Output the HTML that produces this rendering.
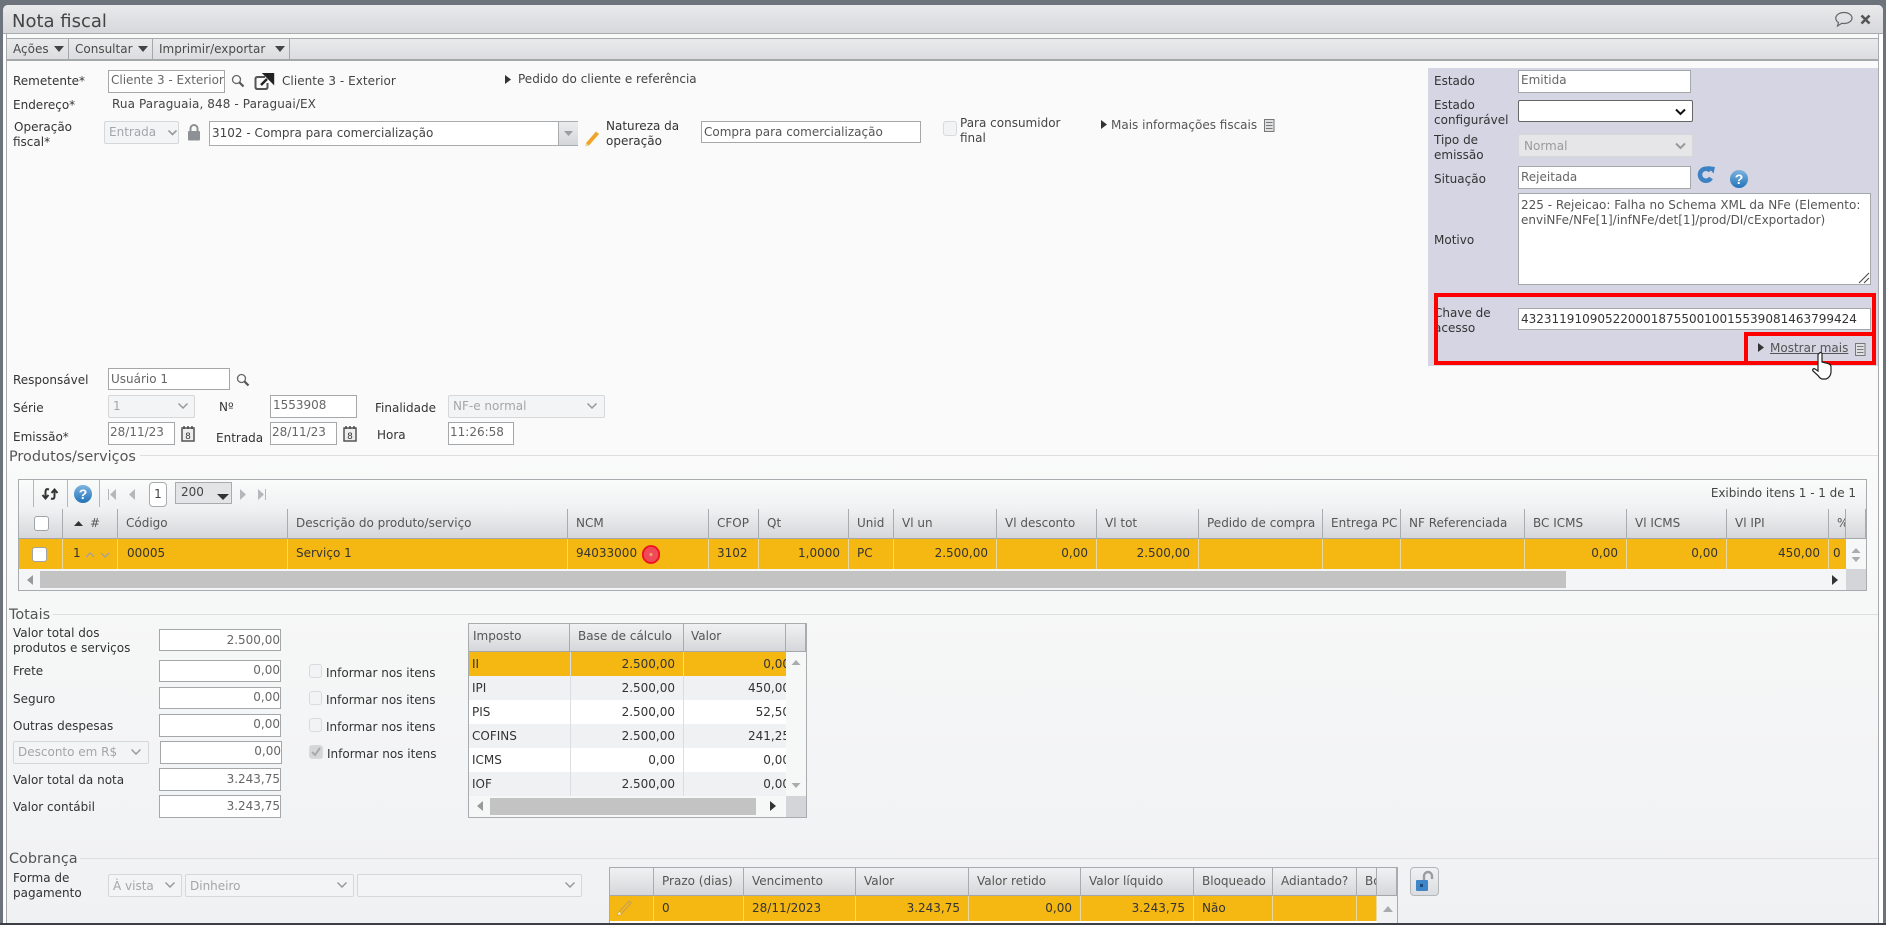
<!DOCTYPE html>
<html><head><meta charset="utf-8"><title>Nota fiscal</title>
<style>
html,body{margin:0;padding:0;background:#5a6068}
#p{position:relative;width:1886px;height:925px;overflow:hidden;background:#6d737a;font:12px/16px "DejaVu Sans",sans-serif;color:#333}
#p div,#p span.a,#p svg{position:absolute}
.t{white-space:nowrap;height:16px;line-height:16px}
.i{box-sizing:border-box;background:#fff;border:1px solid #a4a8ab;color:#666;padding:0 2px;line-height:17px;white-space:nowrap;overflow:hidden}
.r{text-align:right;padding-right:0}
.s{box-sizing:border-box;background:#f3f4f5;border:1px solid #d5d7d9;border-radius:2px;color:#a3a6a8;padding-left:4px;line-height:19px;white-space:nowrap}
.cb{box-sizing:border-box;background:#fff;border:1px solid #a0a4a8;border-radius:3px}
.cd{box-sizing:border-box;background:#f2f3f4;border:1px solid #d8dadc;border-radius:3px}
.h{background:linear-gradient(#f0f1f2,#d6d7da);border-bottom:1px solid #a4a7aa;border-right:1px solid #a9acaf;box-sizing:border-box;color:#555;line-height:27px;padding-left:8px;white-space:nowrap;overflow:hidden}
.c{background:#f5b813;box-sizing:border-box;border-right:1px solid #e9d8a0;color:#333;line-height:28px;padding:0 8px;white-space:nowrap;overflow:hidden}
.sec{font-size:14.4px;color:#555}
.ln{height:1px;background:#dcdee0}
.btn{box-sizing:border-box;top:38px;height:23px;border-right:1px solid #a5a8ab;color:#4a4a4a;line-height:23px;padding-left:6px}
</style></head><body><div id="p">

<div style="left:3px;top:5px;width:1880px;height:920px;background:#f8f9f9;border-radius:5px 5px 0 0"></div>
<div style="left:3px;top:5px;width:1880px;height:28px;background:linear-gradient(#e9eaec,#d7d8db);border-bottom:1px solid #a8abae;border-radius:5px 5px 0 0;box-sizing:content-box"></div>
<div class="t" style="left:12px;top:11px;font-size:18px;line-height:22px;height:22px;color:#444">Nota fiscal</div>
<svg style="left:1834px;top:11px" width="20" height="17" viewBox="0 0 20 17"><path d="M10 1.500c4.500 0 8 2.400 8 5.500s-3.500 5.500-8 5.500c-.8 0-1.500 0-2.200-.2L3.500 15l1-3.500C2.800 10.500 1.800 8.900 1.800 7 1.800 3.900 5.500 1.500 10 1.500z" fill="none" stroke="#666" stroke-width="1.200"/></svg>
<svg style="left:1860px;top:14px" width="11" height="11" viewBox="0 0 11 11"><path d="M1.500 1.500l8 8M9.500 1.500l-8 8" stroke="#555" stroke-width="2.600"/></svg>

<div style="left:6px;top:33px;width:1px;height:892px;background:#a8abae"></div>
<div style="left:1878px;top:33px;width:1px;height:892px;background:#a8abae"></div>
<div style="left:7px;top:61px;width:1871px;height:864px;background:linear-gradient(#f9faf9 0,#f9faf9 45%,#f0f1f3 100%)"></div>
<div style="left:4px;top:34px;width:2px;height:891px;background:#fff"></div>
<div style="left:1879px;top:34px;width:4px;height:891px;background:#fff"></div>

<!-- toolbar -->
<div style="left:6px;top:38px;width:1873px;height:23px;box-sizing:border-box;background:linear-gradient(#e9eaeb,#dcdde0);border:1px solid #a8abae;border-bottom:2px solid #a3a9a9"></div>
<div class="btn" style="left:7px;width:62px">Ações</div>
<div class="btn" style="left:69px;width:84px">Consultar</div>
<div class="btn" style="left:153px;width:137px">Imprimir/exportar</div>
<svg style="left:54px;top:46px" width="10" height="6"><path d="M0 0h10L5 6z" fill="#444"/></svg>
<svg style="left:138px;top:46px" width="10" height="6"><path d="M0 0h10L5 6z" fill="#444"/></svg>
<svg style="left:275px;top:46px" width="10" height="6"><path d="M0 0h10L5 6z" fill="#444"/></svg>

<!-- left form -->
<div class="t" style="left:13px;top:73px">Remetente*</div>
<div class="i" style="left:108px;top:70px;width:117px;height:23px;line-height:19px">Cliente 3 - Exterior</div>
<svg style="left:231px;top:74px" width="14" height="14" viewBox="0 0 14 14"><circle cx="5.500" cy="5.500" r="4" fill="none" stroke="#666" stroke-width="1.300"/><path d="M8.500 8.500l4 4" stroke="#555" stroke-width="2.200"/></svg>
<svg style="left:254px;top:73px" width="22" height="18" viewBox="0 0 22 18"><path d="M11 4H3.500Q1.500 4 1.500 6v8q0 2 2 2h8q2 0 2-2v-4" fill="none" stroke="#555" stroke-width="2"/><path d="M7 12l6-6M10.500 1H19v8.500z" stroke="#222" stroke-width="2.400" fill="#222"/></svg>
<div class="t" style="left:282px;top:73px;color:#444;letter-spacing:.05px">Cliente 3 - Exterior</div>
<svg style="left:505px;top:75px" width="6" height="9"><path d="M0 0l6 4.500L0 9z" fill="#333"/></svg>
<div class="t" style="left:518px;top:71px;color:#444">Pedido do cliente e referência</div>

<div class="t" style="left:13px;top:97px">Endereço*</div>
<div class="t" style="left:112px;top:96px;color:#444;letter-spacing:.1px">Rua Paraguaia, 848 - Paraguai/EX</div>

<div class="t" style="left:14px;top:119px">Operação</div>
<div class="t" style="left:13px;top:134px">fiscal*</div>
<div class="s" style="left:104px;top:121px;width:75px;height:23px;line-height:21px">Entrada</div>
<svg style="left:168px;top:130px" width="9" height="6"><path d="M.5.500L4.500 4.500 8.500.500" fill="none" stroke="#999" stroke-width="1.600"/></svg>
<svg style="left:187px;top:124px" width="14" height="17" viewBox="0 0 14 17"><path d="M3.500 8V4.500a3.500 3.500 0 0 1 7 0V8" fill="none" stroke="#8d9094" stroke-width="2"/><rect x="1" y="7" width="12" height="9.500" rx="1" fill="#8d9094"/></svg>
<div class="i" style="left:209px;top:121px;width:369px;height:25px;line-height:23px;color:#444;border-color:#a9acaf">3102 - Compra para comercialização</div>
<div style="left:558px;top:122px;width:19px;height:23px;background:linear-gradient(#eceded,#d5d6d9);border-left:1px solid #a9acaf"></div>
<svg style="left:564px;top:131px" width="9" height="5"><path d="M0 0h9L4.500 5z" fill="#9a9da0"/></svg>
<svg style="left:584px;top:130px" width="16" height="17" viewBox="0 0 16 17"><path d="M12 1.500l3 2.500L5 15.500l-3.500 1 .5-3.500z" fill="#f0a52a"/><path d="M2 13l3 2.500-3.500 1z" fill="#e8d8b0"/></svg>
<div class="t" style="left:606px;top:118px">Natureza da</div>
<div class="t" style="left:606px;top:133px">operação</div>
<div class="i" style="left:701px;top:121px;width:220px;height:22px;line-height:20px;color:#555">Compra para comercialização</div>
<div class="cd" style="left:943px;top:121px;width:14px;height:15px"></div>
<div class="t" style="left:960px;top:115px;color:#444">Para consumidor</div>
<div class="t" style="left:960px;top:130px;color:#444">final</div>
<svg style="left:1101px;top:120px" width="6" height="9"><path d="M0 0l6 4.500L0 9z" fill="#333"/></svg>
<div class="t" style="left:1111px;top:117px;color:#555">Mais informações fiscais</div>
<svg style="left:1264px;top:119px" width="11" height="13" viewBox="0 0 11 13"><rect x=".5" y=".5" width="9.500" height="12" fill="#dfe0e2" stroke="#777"/><path d="M2 3.500h6.500M2 6.500h6.500M2 9.500h6.500" stroke="#777"/></svg>

<!-- right panel -->
<div style="left:1428px;top:68px;width:450px;height:298px;background:#d5d5e3"></div>
<div class="t" style="left:1434px;top:73px">Estado</div>
<div class="i" style="left:1518px;top:70px;width:173px;height:23px;line-height:19px">Emitida</div>
<div class="t" style="left:1434px;top:97px">Estado</div>
<div class="t" style="left:1434px;top:112px">configurável</div>
<div style="left:1518px;top:100px;width:175px;height:22px;box-sizing:border-box;background:#fff;border:1px solid #666;border-radius:2px"></div>
<svg style="left:1675px;top:108px" width="11" height="8"><path d="M1 1.500L5.500 6 10 1.500" fill="none" stroke="#111" stroke-width="2"/></svg>
<div class="t" style="left:1434px;top:132px">Tipo de</div>
<div class="t" style="left:1434px;top:147px">emissão</div>
<div class="s" style="left:1518px;top:134px;width:175px;height:23px;background:#e6e6e9;color:#9a9a9c;padding-left:5px;line-height:22px">Normal</div>
<svg style="left:1675px;top:142px" width="11" height="8"><path d="M1 1.500L5.500 6 10 1.500" fill="none" stroke="#999" stroke-width="2"/></svg>
<div class="t" style="left:1434px;top:171px">Situação</div>
<div class="i" style="left:1518px;top:166px;width:173px;height:23px;line-height:20px">Rejeitada</div>
<svg style="left:1696px;top:165px" width="20" height="20" viewBox="0 0 20 20"><path d="M14.500 5.800A6 6 0 1 0 15 13" fill="none" stroke="#3d82c4" stroke-width="4.500"/><path d="M11 1l8 1-1.500 6.500z" fill="#3d82c4"/></svg>
<svg style="left:1730px;top:170px" width="18" height="18" viewBox="0 0 18 18"><defs><linearGradient id="g" x1="0" y1="0" x2="0" y2="1"><stop offset="0" stop-color="#7db4e0"/><stop offset="1" stop-color="#2273b9"/></linearGradient></defs><circle cx="9" cy="9" r="9" fill="url(#g)"/><text x="9" y="14" text-anchor="middle" font-family="Liberation Sans,sans-serif" font-weight="bold" font-size="14" fill="#fff">?</text></svg>
<div class="t" style="left:1434px;top:232px">Motivo</div>
<div class="i" style="left:1518px;top:193px;width:353px;height:92px;white-space:normal;color:#555;line-height:15px;padding:4px 2px;overflow:hidden"><span style="white-space:nowrap">225 - Rejeicao: Falha no Schema XML da NFe (Elemento:</span><br>enviNFe/NFe[1]/infNFe/det[1]/prod/DI/cExportador)</div>
<svg style="left:1858px;top:272px" width="12" height="12"><path d="M1 11L11 1M6 11l5-5" stroke="#444" stroke-width="1"/></svg>
<div class="t" style="left:1434px;top:305px">Chave de</div>
<div class="t" style="left:1434px;top:320px">acesso</div>
<div class="i" style="left:1518px;top:308px;width:353px;height:22px;color:#333;line-height:21px">43231191090522000187550010015539081463799424</div>
<div style="left:1434px;top:293px;width:442px;height:72px;box-sizing:border-box;border:4px solid #f00"></div>
<div style="left:1744px;top:332px;width:132px;height:33px;box-sizing:border-box;border:4px solid #f00"></div>
<svg style="left:1758px;top:343px" width="6" height="9"><path d="M0 0l6 4.500L0 9z" fill="#333"/></svg>
<div class="t" style="left:1770px;top:340px;color:#555;text-decoration:underline">Mostrar mais</div>
<svg style="left:1855px;top:343px" width="11" height="13" viewBox="0 0 11 13"><rect x=".5" y=".5" width="9.500" height="12" fill="#dfe0e2" stroke="#777"/><path d="M2 3.500h6.500M2 6.500h6.500M2 9.500h6.500" stroke="#777"/></svg>
<svg style="left:1811px;top:351px" width="24" height="30" viewBox="0 0 24 30"><path d="M8.500 2c1-1 2.500-.5 2.500 1v8l6 1.500c2 .6 3 1.500 3 3.500v5c0 3-2 6-5 7h-4c-2-.5-3-2-4-3.500L2 20c-1-1.500.5-3 2-2l3 2V3.500z" fill="#fff" stroke="#222" stroke-width="1.200"/></svg>

<!-- second form -->
<div class="t" style="left:13px;top:372px">Responsável</div>
<div class="i" style="left:108px;top:368px;width:122px;height:22px;line-height:20px">Usuário 1</div>
<svg style="left:236px;top:373px" width="14" height="14" viewBox="0 0 14 14"><circle cx="5.500" cy="5.500" r="4" fill="none" stroke="#666" stroke-width="1.300"/><path d="M8.500 8.500l4 4" stroke="#555" stroke-width="2.200"/></svg>
<div class="t" style="left:13px;top:400px">Série</div>
<div class="s" style="left:108px;top:395px;width:87px;height:23px;line-height:21px">1</div>
<svg style="left:178px;top:403px" width="10" height="6"><path d="M.5.500L5 5 9.500.500" fill="none" stroke="#999" stroke-width="1.500"/></svg>
<div class="t" style="left:219px;top:399px">Nº</div>
<div class="i" style="left:270px;top:395px;width:87px;height:23px;line-height:19px">1553908</div>
<div class="t" style="left:375px;top:400px">Finalidade</div>
<div class="s" style="left:448px;top:395px;width:157px;height:23px;line-height:21px">NF-e normal</div>
<svg style="left:587px;top:403px" width="10" height="6"><path d="M.5.500L5 5 9.500.500" fill="none" stroke="#999" stroke-width="1.500"/></svg>
<div class="t" style="left:13px;top:429px">Emissão*</div>
<div class="i" style="left:108px;top:422px;width:67px;height:23px;line-height:19px;padding:0 1px">28/11/23</div>
<svg style="left:181px;top:426px" width="14" height="16" viewBox="0 0 14 16"><rect x="1" y="2" width="12" height="13" fill="#eee" stroke="#555" stroke-width="1.500"/><path d="M3 0v3M7 0v3M11 0v3" stroke="#444" stroke-width="1.400"/><text x="7" y="13" text-anchor="middle" font-size="9" fill="#333" font-family="DejaVu Sans">8</text></svg>
<div class="t" style="left:216px;top:430px">Entrada</div>
<div class="i" style="left:270px;top:422px;width:67px;height:23px;line-height:19px;padding:0 1px">28/11/23</div>
<svg style="left:343px;top:426px" width="14" height="16" viewBox="0 0 14 16"><rect x="1" y="2" width="12" height="13" fill="#eee" stroke="#555" stroke-width="1.500"/><path d="M3 0v3M7 0v3M11 0v3" stroke="#444" stroke-width="1.400"/><text x="7" y="13" text-anchor="middle" font-size="9" fill="#333" font-family="DejaVu Sans">8</text></svg>
<div class="t" style="left:377px;top:427px">Hora</div>
<div class="i" style="left:448px;top:422px;width:66px;height:23px;line-height:19px;padding:0 1px">11:26:58</div>

<div class="t sec" style="left:9px;top:448px;height:18px;line-height:18px">Produtos/serviços</div>
<div class="ln" style="left:140px;top:455px;width:1738px"></div>

<!-- product grid -->
<div style="left:18px;top:479px;width:1849px;height:112px;box-sizing:border-box;border:1px solid #a9acaf;background:#f6f7f7"></div>
<div style="left:19px;top:480px;width:1847px;height:29px;background:linear-gradient(#fafbfb,#f0f1f2)"></div>
<div style="left:33px;top:480px;width:1px;height:27px;background:#b4b7ba"></div>
<div style="left:67px;top:480px;width:1px;height:27px;background:#b4b7ba"></div>
<div style="left:99px;top:480px;width:1px;height:27px;background:#b4b7ba"></div>
<svg style="left:41px;top:487px" width="18" height="14" viewBox="0 0 18 14"><path d="M8 2.500C5 1.500 4.500 3 4.500 5v5M1.500 8l3 3.500L7.500 8M10 11.500c3 1 3.500-.5 3.500-2.500V4M10.500 6l3-3.500L16.500 6" fill="none" stroke="#333" stroke-width="2"/></svg>
<svg style="left:74px;top:485px" width="18" height="18" viewBox="0 0 18 18"><circle cx="9" cy="9" r="9" fill="url(#g)"/><text x="9" y="14" text-anchor="middle" font-family="Liberation Sans,sans-serif" font-weight="bold" font-size="14" fill="#fff">?</text></svg>
<svg style="left:107px;top:489px" width="9" height="11"><path d="M1 0h1v11H1zM9 0v11L3 5.500z" fill="#b5b8bb"/></svg>
<svg style="left:129px;top:489px" width="7" height="11"><path d="M6 0v11L0 5.500z" fill="#b5b8bb"/></svg>
<div style="left:149px;top:482px;width:18px;height:25px;box-sizing:border-box;background:#fff;border:1px solid #a9acaf;border-radius:4px;text-align:center;line-height:23px;color:#444">1</div>
<div style="left:175px;top:482px;width:57px;height:22px;box-sizing:border-box;background:#e3e4e6;border:1px solid #a9acaf;color:#444;padding-left:5px;line-height:19px">200</div>
<svg style="left:217px;top:494px" width="12" height="6"><path d="M0 0h12L6 6z" fill="#333"/></svg>
<svg style="left:240px;top:489px" width="7" height="11"><path d="M0 0v11l6-5.500z" fill="#b5b8bb"/></svg>
<svg style="left:258px;top:489px" width="9" height="11"><path d="M0 0v11l6-5.500zM7 0h1v11H7z" fill="#b5b8bb"/></svg>
<div class="t" style="right:30px;top:485px;color:#444;letter-spacing:-.03px">Exibindo itens 1 - 1 de 1</div>

<div class="h" style="left:19px;top:509px;width:44px;height:30px"></div>
<div class="cb" style="left:34px;top:516px;width:15px;height:15px"></div>
<div class="h" style="left:63px;top:509px;width:55px;height:30px;padding-left:27px;line-height:28px">#</div>
<svg style="left:74px;top:521px" width="9" height="5"><path d="M0 5h9L4.500 0z" fill="#333"/></svg>
<div class="h" style="left:118px;top:509px;width:170px;height:30px;padding-left:8px;line-height:28px">Código</div>
<div class="h" style="left:288px;top:509px;width:280px;height:30px;padding-left:8px;line-height:28px">Descrição do produto/serviço</div>
<div class="h" style="left:568px;top:509px;width:141px;height:30px;line-height:28px">NCM</div>
<div class="h" style="left:709px;top:509px;width:50px;height:30px;line-height:28px">CFOP</div>
<div class="h" style="left:759px;top:509px;width:90px;height:30px;line-height:28px">Qt</div>
<div class="h" style="left:849px;top:509px;width:45px;height:30px;line-height:28px">Unid</div>
<div class="h" style="left:894px;top:509px;width:103px;height:30px;line-height:28px">Vl un</div>
<div class="h" style="left:997px;top:509px;width:100px;height:30px;line-height:28px">Vl desconto</div>
<div class="h" style="left:1097px;top:509px;width:102px;height:30px;line-height:28px">Vl tot</div>
<div class="h" style="left:1199px;top:509px;width:124px;height:30px;line-height:28px">Pedido de compra</div>
<div class="h" style="left:1323px;top:509px;width:78px;height:30px;line-height:28px">Entrega PC</div>
<div class="h" style="left:1401px;top:509px;width:124px;height:30px;line-height:28px">NF Referenciada</div>
<div class="h" style="left:1525px;top:509px;width:102px;height:30px;line-height:28px">BC ICMS</div>
<div class="h" style="left:1627px;top:509px;width:100px;height:30px;line-height:28px">Vl ICMS</div>
<div class="h" style="left:1727px;top:509px;width:102px;height:30px;line-height:28px">Vl IPI</div>
<div class="h" style="left:1829px;top:509px;width:17px;height:30px;line-height:28px;padding-left:8px">%</div>
<div class="h" style="left:1846px;top:509px;width:20px;height:30px"></div>

<div class="c" style="left:19px;top:539px;width:44px;height:30px"></div>
<div class="cb" style="left:32px;top:547px;width:15px;height:15px"></div>
<div class="c" style="left:63px;top:539px;width:55px;height:30px;padding-left:10px">1</div>
<svg style="left:85px;top:552px" width="26" height="6"><path d="M1 5l4-4 4 4M16 1l4 4 4-4" fill="none" stroke="#9c9cb0" stroke-width="1.200"/></svg>
<div class="c" style="left:118px;top:539px;width:170px;height:30px;padding-left:9px">00005</div>
<div class="c" style="left:288px;top:539px;width:280px;height:30px">Serviço 1</div>
<div class="c" style="left:568px;top:539px;width:141px;height:30px">94033000</div>
<svg style="left:642px;top:545px" width="18" height="19" viewBox="0 0 18 19"><ellipse cx="9" cy="9.500" rx="8.200" ry="8.500" fill="#ef4a58" stroke="#ee1020" stroke-width="1.800"/><circle cx="9" cy="9.500" r="1.600" fill="#f0a070"/></svg>
<div class="c" style="left:709px;top:539px;width:50px;height:30px">3102</div>
<div class="c" style="left:759px;top:539px;width:90px;height:30px;text-align:right">1,0000</div>
<div class="c" style="left:849px;top:539px;width:45px;height:30px">PC</div>
<div class="c" style="left:894px;top:539px;width:103px;height:30px;text-align:right">2.500,00</div>
<div class="c" style="left:997px;top:539px;width:100px;height:30px;text-align:right">0,00</div>
<div class="c" style="left:1097px;top:539px;width:102px;height:30px;text-align:right">2.500,00</div>
<div class="c" style="left:1199px;top:539px;width:124px;height:30px"></div>
<div class="c" style="left:1323px;top:539px;width:78px;height:30px"></div>
<div class="c" style="left:1401px;top:539px;width:124px;height:30px"></div>
<div class="c" style="left:1525px;top:539px;width:102px;height:30px;text-align:right">0,00</div>
<div class="c" style="left:1627px;top:539px;width:100px;height:30px;text-align:right">0,00</div>
<div class="c" style="left:1727px;top:539px;width:102px;height:30px;text-align:right">450,00</div>
<div class="c" style="left:1829px;top:539px;width:17px;height:30px;padding-left:4px;border:0">0</div>
<svg style="left:1850px;top:547px" width="12" height="16"><path d="M6 1l4.500 5h-9zM6 15l4.500-5h-9z" fill="#a9acaf"/></svg>
<div style="left:1846px;top:569px;width:20px;height:21px;background:#d3d5d8"></div>
<div style="left:19px;top:569px;width:1827px;height:21px;background:#f4f5f6"></div>
<div style="left:40px;top:571px;width:1526px;height:17px;background:#c3c3c3"></div>
<svg style="left:27px;top:575px" width="6" height="10"><path d="M6 0v10L0 5z" fill="#999"/></svg>
<svg style="left:1832px;top:575px" width="6" height="10"><path d="M0 0v10l6-5z" fill="#333"/></svg>

<!-- totals -->
<div class="t sec" style="left:9px;top:606px;height:18px;line-height:18px">Totais</div>
<div class="ln" style="left:53px;top:614px;width:1825px"></div>
<div class="t" style="left:13px;top:625px">Valor total dos</div>
<div class="t" style="left:13px;top:640px">produtos e serviços</div>
<div class="i r" style="left:159px;top:629px;width:122px;height:22px;line-height:20px">2.500,00</div>
<div class="t" style="left:13px;top:663px">Frete</div>
<div class="i r" style="left:159px;top:660px;width:122px;height:22px;line-height:18px">0,00</div>
<div class="t" style="left:13px;top:691px">Seguro</div>
<div class="i r" style="left:159px;top:687px;width:122px;height:22px;line-height:18px">0,00</div>
<div class="t" style="left:13px;top:718px">Outras despesas</div>
<div class="i r" style="left:159px;top:714px;width:122px;height:23px;line-height:18px">0,00</div>
<div class="s" style="left:13px;top:741px;width:136px;height:23px;line-height:21px">Desconto em R$</div>
<svg style="left:131px;top:749px" width="10" height="6"><path d="M.5.500L5 5 9.500.500" fill="none" stroke="#999" stroke-width="1.500"/></svg>
<div class="i r" style="left:160px;top:741px;width:122px;height:23px;line-height:18px">0,00</div>
<div class="t" style="left:13px;top:772px">Valor total da nota</div>
<div class="i r" style="left:159px;top:768px;width:122px;height:23px;line-height:21px">3.243,75</div>
<div class="t" style="left:13px;top:799px">Valor contábil</div>
<div class="i r" style="left:159px;top:795px;width:122px;height:23px;line-height:21px">3.243,75</div>

<div class="cd" style="left:309px;top:664px;width:13px;height:14px"></div>
<div class="t" style="left:326px;top:665px">Informar nos itens</div>
<div class="cd" style="left:309px;top:691px;width:13px;height:14px"></div>
<div class="t" style="left:326px;top:692px">Informar nos itens</div>
<div class="cd" style="left:309px;top:718px;width:13px;height:14px"></div>
<div class="t" style="left:326px;top:719px">Informar nos itens</div>
<div class="cd" style="left:309px;top:745px;width:14px;height:14px;background:#d5d6d8"></div>
<svg style="left:310px;top:746px" width="12" height="12"><path d="M2 6l3 3 5-7" fill="none" stroke="#aaa" stroke-width="2"/></svg>
<div class="t" style="left:327px;top:746px">Informar nos itens</div>

<!-- tax grid -->
<div style="left:468px;top:623px;width:339px;height:195px;box-sizing:border-box;border:1px solid #a9acaf;background:#f6f7f7"></div>
<div class="h" style="left:469px;top:624px;width:101px;height:28px;padding-left:4px;line-height:25px">Imposto</div>
<div class="h" style="left:570px;top:624px;width:114px;height:28px;padding-left:8px;line-height:25px">Base de cálculo</div>
<div class="h" style="left:684px;top:624px;width:102px;height:28px;padding-left:7px;line-height:25px">Valor</div>
<div class="h" style="left:786px;top:624px;width:20px;height:28px"></div>

<div style="left:469px;top:652px;width:317px;height:24px;background:#f5b813"></div>
<div style="left:469px;top:676px;width:317px;height:24px;background:#f0f1f3"></div>
<div style="left:469px;top:700px;width:317px;height:24px;background:#fff"></div>
<div style="left:469px;top:724px;width:317px;height:24px;background:#f0f1f3"></div>
<div style="left:469px;top:748px;width:317px;height:24px;background:#fff"></div>
<div style="left:469px;top:772px;width:317px;height:24px;background:#f0f1f3"></div>
<div style="left:570px;top:652px;width:1px;height:144px;background:#dcdde0"></div>
<div style="left:683px;top:652px;width:1px;height:144px;background:#dcdde0"></div>

<div class="t" style="left:472px;top:656px">II</div><div class="t" style="right:1211px;top:656px">2.500,00</div>
<div class="t" style="left:472px;top:680px">IPI</div><div class="t" style="right:1211px;top:680px">2.500,00</div>
<div class="t" style="left:472px;top:704px">PIS</div><div class="t" style="right:1211px;top:704px">2.500,00</div>
<div class="t" style="left:472px;top:728px">COFINS</div><div class="t" style="right:1211px;top:728px">2.500,00</div>
<div class="t" style="left:472px;top:752px">ICMS</div><div class="t" style="right:1211px;top:752px">0,00</div>
<div class="t" style="left:472px;top:776px">IOF</div><div class="t" style="right:1211px;top:776px">2.500,00</div>
<div style="left:684px;top:652px;width:102px;height:144px;overflow:hidden">
<div class="t" style="right:-4px;top:4px">0,00</div>
<div class="t" style="right:-4px;top:28px">450,00</div>
<div class="t" style="right:-4px;top:52px">52,50</div>
<div class="t" style="right:-4px;top:76px">241,25</div>
<div class="t" style="right:-4px;top:100px">0,00</div>
<div class="t" style="right:-4px;top:124px">0,00</div>
</div>
<svg style="left:791px;top:659px" width="10" height="130"><path d="M5 1l4.500 5h-9zM5 129l4.500-5h-9z" fill="#a9acaf"/></svg>
<div style="left:786px;top:796px;width:20px;height:21px;background:#d3d5d8"></div>
<div style="left:490px;top:798px;width:266px;height:17px;background:#c3c3c3"></div>
<svg style="left:477px;top:801px" width="6" height="10"><path d="M6 0v10L0 5z" fill="#999"/></svg>
<svg style="left:770px;top:801px" width="6" height="10"><path d="M0 0v10l6-5z" fill="#333"/></svg>

<!-- cobrança -->
<div class="t sec" style="left:9px;top:850px;height:18px;line-height:18px">Cobrança</div>
<div class="ln" style="left:80px;top:858px;width:1798px"></div>
<div class="t" style="left:13px;top:870px">Forma de</div>
<div class="t" style="left:13px;top:885px">pagamento</div>
<div class="s" style="left:108px;top:874px;width:74px;height:23px;line-height:22px">À vista</div>
<svg style="left:165px;top:882px" width="10" height="6"><path d="M.5.500L5 5 9.500.500" fill="none" stroke="#999" stroke-width="1.500"/></svg>
<div class="s" style="left:185px;top:874px;width:169px;height:23px;line-height:22px">Dinheiro</div>
<svg style="left:337px;top:882px" width="10" height="6"><path d="M.5.500L5 5 9.500.500" fill="none" stroke="#999" stroke-width="1.500"/></svg>
<div class="s" style="left:357px;top:874px;width:225px;height:23px"></div>
<svg style="left:565px;top:882px" width="10" height="6"><path d="M.5.500L5 5 9.500.500" fill="none" stroke="#999" stroke-width="1.500"/></svg>

<div style="left:609px;top:867px;width:789px;height:58px;box-sizing:border-box;border:1px solid #a9acaf;border-bottom:0;background:#fff"></div>
<div class="h" style="left:610px;top:868px;width:44px;height:28px"></div>
<div class="h" style="left:654px;top:868px;width:90px;height:28px;line-height:26px">Prazo (dias)</div>
<div class="h" style="left:744px;top:868px;width:112px;height:28px;line-height:26px">Vencimento</div>
<div class="h" style="left:856px;top:868px;width:113px;height:28px;line-height:26px">Valor</div>
<div class="h" style="left:969px;top:868px;width:112px;height:28px;line-height:26px">Valor retido</div>
<div class="h" style="left:1081px;top:868px;width:113px;height:28px;line-height:26px">Valor líquido</div>
<div class="h" style="left:1194px;top:868px;width:79px;height:28px;line-height:26px">Bloqueado</div>
<div class="h" style="left:1273px;top:868px;width:84px;height:28px;line-height:26px">Adiantado?</div>
<div class="h" style="left:1357px;top:868px;width:20px;height:28px;line-height:26px">Bo</div>
<div class="h" style="left:1377px;top:868px;width:20px;height:28px"></div>

<div class="c" style="left:610px;top:896px;width:44px;height:25px"></div>
<svg style="left:616px;top:899px" width="16" height="18" viewBox="0 0 16 18"><path d="M13 2L3 13l-1 3 3-1L15 4z" fill="none" stroke="#c9a050" stroke-width="1.200"/><path d="M2 16l3-1-2-2z" fill="#fff"/></svg>
<div class="c" style="left:654px;top:896px;width:90px;height:25px;line-height:24px">0</div>
<div class="c" style="left:744px;top:896px;width:112px;height:25px;line-height:24px">28/11/2023</div>
<div class="c" style="left:856px;top:896px;width:113px;height:25px;line-height:24px;text-align:right">3.243,75</div>
<div class="c" style="left:969px;top:896px;width:112px;height:25px;line-height:24px;text-align:right">0,00</div>
<div class="c" style="left:1081px;top:896px;width:113px;height:25px;line-height:24px;text-align:right">3.243,75</div>
<div class="c" style="left:1194px;top:896px;width:79px;height:25px;line-height:24px">Não</div>
<div class="c" style="left:1273px;top:896px;width:84px;height:25px"></div>
<div class="c" style="left:1357px;top:896px;width:20px;height:25px"></div>
<div style="left:1377px;top:896px;width:20px;height:29px;background:#f1f2f3"></div>
<svg style="left:1383px;top:906px" width="10" height="6"><path d="M5 0l5 6H0z" fill="#a9acaf"/></svg>

<div style="left:1410px;top:867px;width:29px;height:29px;box-sizing:border-box;background:linear-gradient(#f0f1f2,#dcdde0);border:1px solid #b4b7ba;border-radius:4px"></div>
<svg style="left:1414px;top:870px" width="21" height="23" viewBox="0 0 21 23"><path d="M10 11V6a4 4 0 0 1 8 0v3" fill="none" stroke="#9a9da0" stroke-width="2.400"/><rect x="2" y="10" width="12" height="11" rx="1" fill="#3f86c8"/><rect x="6" y="14" width="3" height="3" fill="#1d4a78"/></svg>

<!-- bottom edge -->
<div style="left:0;top:923px;width:1886px;height:2px;background:#3c3f44"></div>
</div></body></html>
